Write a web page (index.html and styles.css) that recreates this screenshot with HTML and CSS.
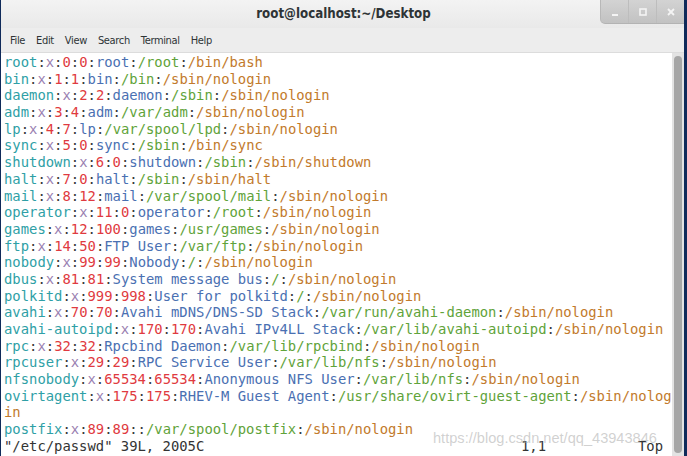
FILE: index.html
```html
<!DOCTYPE html>
<html>
<head>
<meta charset="utf-8">
<link rel="stylesheet" href="styles.css">
</head>
<body>
<div class="window">
  <div class="titlebar">
    <div></div>
    <div class="title">root@localhost:~/Desktop</div>
    <div class="wbuttons">
      <div class="wbtn"><svg width="8" height="8" viewBox="0 0 8 8"><rect x="1" y="6" width="6" height="2" fill="#f4f4f4"/></svg></div>
      <div class="wbtn"><svg width="8" height="8" viewBox="0 0 8 8"><rect x="1" y="1" width="6" height="6" fill="none" stroke="#f4f4f4" stroke-width="1.6"/></svg></div>
      <div class="wbtn"><svg width="8" height="8" viewBox="0 0 8 8"><path d="M1 1L7 7M7 1L1 7" stroke="#f4f4f4" stroke-width="1.8"/></svg></div>
    </div>
  </div>
  <div class="menubar">
    <span class="mi">File</span><span class="mi">Edit</span><span class="mi">View</span><span class="mi">Search</span><span class="mi">Terminal</span><span class="mi">Help</span>
  </div>
  <div class="term">
    <div class="content">
<div class="ln"><span class="u">root</span>:<span class="x">x</span>:<span class="n">0</span>:<span class="n">0</span>:<span class="g">root</span>:<span class="h">/root</span>:<span class="sh">/bin/bash</span></div>
<div class="ln"><span class="u">bin</span>:<span class="x">x</span>:<span class="n">1</span>:<span class="n">1</span>:<span class="g">bin</span>:<span class="h">/bin</span>:<span class="sh">/sbin/nologin</span></div>
<div class="ln"><span class="u">daemon</span>:<span class="x">x</span>:<span class="n">2</span>:<span class="n">2</span>:<span class="g">daemon</span>:<span class="h">/sbin</span>:<span class="sh">/sbin/nologin</span></div>
<div class="ln"><span class="u">adm</span>:<span class="x">x</span>:<span class="n">3</span>:<span class="n">4</span>:<span class="g">adm</span>:<span class="h">/var/adm</span>:<span class="sh">/sbin/nologin</span></div>
<div class="ln"><span class="u">lp</span>:<span class="x">x</span>:<span class="n">4</span>:<span class="n">7</span>:<span class="g">lp</span>:<span class="h">/var/spool/lpd</span>:<span class="sh">/sbin/nologin</span></div>
<div class="ln"><span class="u">sync</span>:<span class="x">x</span>:<span class="n">5</span>:<span class="n">0</span>:<span class="g">sync</span>:<span class="h">/sbin</span>:<span class="sh">/bin/sync</span></div>
<div class="ln"><span class="u">shutdown</span>:<span class="x">x</span>:<span class="n">6</span>:<span class="n">0</span>:<span class="g">shutdown</span>:<span class="h">/sbin</span>:<span class="sh">/sbin/shutdown</span></div>
<div class="ln"><span class="u">halt</span>:<span class="x">x</span>:<span class="n">7</span>:<span class="n">0</span>:<span class="g">halt</span>:<span class="h">/sbin</span>:<span class="sh">/sbin/halt</span></div>
<div class="ln"><span class="u">mail</span>:<span class="x">x</span>:<span class="n">8</span>:<span class="n">12</span>:<span class="g">mail</span>:<span class="h">/var/spool/mail</span>:<span class="sh">/sbin/nologin</span></div>
<div class="ln"><span class="u">operator</span>:<span class="x">x</span>:<span class="n">11</span>:<span class="n">0</span>:<span class="g">operator</span>:<span class="h">/root</span>:<span class="sh">/sbin/nologin</span></div>
<div class="ln"><span class="u">games</span>:<span class="x">x</span>:<span class="n">12</span>:<span class="n">100</span>:<span class="g">games</span>:<span class="h">/usr/games</span>:<span class="sh">/sbin/nologin</span></div>
<div class="ln"><span class="u">ftp</span>:<span class="x">x</span>:<span class="n">14</span>:<span class="n">50</span>:<span class="g">FTP User</span>:<span class="h">/var/ftp</span>:<span class="sh">/sbin/nologin</span></div>
<div class="ln"><span class="u">nobody</span>:<span class="x">x</span>:<span class="n">99</span>:<span class="n">99</span>:<span class="g">Nobody</span>:<span class="h">/</span>:<span class="sh">/sbin/nologin</span></div>
<div class="ln"><span class="u">dbus</span>:<span class="x">x</span>:<span class="n">81</span>:<span class="n">81</span>:<span class="g">System message bus</span>:<span class="h">/</span>:<span class="sh">/sbin/nologin</span></div>
<div class="ln"><span class="u">polkitd</span>:<span class="x">x</span>:<span class="n">999</span>:<span class="n">998</span>:<span class="g">User for polkitd</span>:<span class="h">/</span>:<span class="sh">/sbin/nologin</span></div>
<div class="ln"><span class="u">avahi</span>:<span class="x">x</span>:<span class="n">70</span>:<span class="n">70</span>:<span class="g">Avahi mDNS/DNS-SD Stack</span>:<span class="h">/var/run/avahi-daemon</span>:<span class="sh">/sbin/nologin</span></div>
<div class="ln"><span class="u">avahi-autoipd</span>:<span class="x">x</span>:<span class="n">170</span>:<span class="n">170</span>:<span class="g">Avahi IPv4LL Stack</span>:<span class="h">/var/lib/avahi-autoipd</span>:<span class="sh">/sbin/nologin</span></div>
<div class="ln"><span class="u">rpc</span>:<span class="x">x</span>:<span class="n">32</span>:<span class="n">32</span>:<span class="g">Rpcbind Daemon</span>:<span class="h">/var/lib/rpcbind</span>:<span class="sh">/sbin/nologin</span></div>
<div class="ln"><span class="u">rpcuser</span>:<span class="x">x</span>:<span class="n">29</span>:<span class="n">29</span>:<span class="g">RPC Service User</span>:<span class="h">/var/lib/nfs</span>:<span class="sh">/sbin/nologin</span></div>
<div class="ln"><span class="u">nfsnobody</span>:<span class="x">x</span>:<span class="n">65534</span>:<span class="n">65534</span>:<span class="g">Anonymous NFS User</span>:<span class="h">/var/lib/nfs</span>:<span class="sh">/sbin/nologin</span></div>
<div class="ln"><span class="u">ovirtagent</span>:<span class="x">x</span>:<span class="n">175</span>:<span class="n">175</span>:<span class="g">RHEV-M Guest Agent</span>:<span class="h">/usr/share/ovirt-guest-agent</span>:<span class="sh">/sbin/nolog</span></div>
<div class="ln"><span class="sh">in</span></div>
<div class="ln"><span class="u">postfix</span>:<span class="x">x</span>:<span class="n">89</span>:<span class="n">89</span>::<span class="h">/var/spool/postfix</span>:<span class="sh">/sbin/nologin</span></div>
<div class="ln status"><span class="st-file">"/etc/passwd" 39L, 2005C</span><span class="st-pos">1,1</span><span class="st-top">Top</span></div>
      <div class="watermark">https://blog.csdn.net/qq_43943846</div>
    </div>
    <div class="scrollbar"><div class="thumb"></div></div>
  </div>
</div>
</body>
</html>
```

FILE: styles.css
```css
html, body {
  margin: 0;
  padding: 0;
}
body {
  width: 687px;
  height: 456px;
  overflow: hidden;
  background: #0f2a5a;
}
.window {
  margin-left: 1px;
  width: 683px;
  height: 456px;
  display: flex;
  flex-direction: column;
  background: #ededed;
}
.titlebar {
  height: 28px;
  flex: none;
  display: grid;
  grid-template-columns: 1fr auto 1fr;
  background: linear-gradient(#f3f3f3, #e9e9e9);
}
.title {
  font-family: "DejaVu Sans", sans-serif;
  font-stretch: condensed;
  font-weight: bold;
  font-size: 13.2px;
  color: #2e3436;
  line-height: 27px;
  padding-left: 2px;
}
.wbuttons {
  justify-self: end;
  align-self: start;
  display: flex;
  height: 23px;
  background: linear-gradient(#d3d3d3, #c2c2c2);
  border-left: 1px solid #b8b8b8;
  border-bottom: 1px solid #b3b3b3;
  border-bottom-left-radius: 5px;
}
.wbtn {
  width: 27px;
  display: flex;
  align-items: center;
  justify-content: center;
  border-left: 1px solid #bdbdbd;
  padding-top: 1px;
}
.wbtn:first-child {
  border-left: none;
}
.menubar {
  height: 24px;
  flex: none;
  display: flex;
  align-items: center;
  padding-left: 9px;
  gap: 11px;
  font-family: "DejaVu Sans", sans-serif;
  font-stretch: condensed;
  font-size: 11px;
  letter-spacing: -0.35px;
  color: #2e3436;
  background: #ededed;
  border-bottom: 1px solid #dcdcdc;
}
.term {
  flex: 1;
  display: flex;
  background: #ffffff;
  min-height: 0;
}
.content {
  flex: 1;
  position: relative;
  padding: 1px 0 0 3px;
  font-family: "DejaVu Sans Mono", monospace;
  font-size: 13.86px;
  line-height: 16.7px;
  color: #3a3a3a;
  overflow: hidden;
}
.ln {
  height: 16.7px;
  white-space: pre;
}
.u { color: #2f9fa6; }
.x { color: #9a80b1; }
.n { color: #df3a40; }
.g { color: #4a70b2; }
.h { color: #5fa33a; }
.sh { color: #c27a2c; }
.status {
  display: flex;
  color: #333333;
}
.st-file { width: 517px; }
.st-pos { width: 117px; }
.watermark {
  position: absolute;
  left: 432px;
  top: 377px;
  font-family: "Liberation Sans", Arial, sans-serif;
  font-size: 14.6px;
  color: rgba(170, 170, 170, 0.55);
  white-space: nowrap;
}
.scrollbar {
  width: 12px;
  flex: none;
  background: #e3e3e3;
  padding: 3px 2px 3px 2px;
  box-sizing: border-box;
  display: flex;
}
.thumb {
  flex: 1;
  background: #a6a6a6;
  border-radius: 4px;
}
```
